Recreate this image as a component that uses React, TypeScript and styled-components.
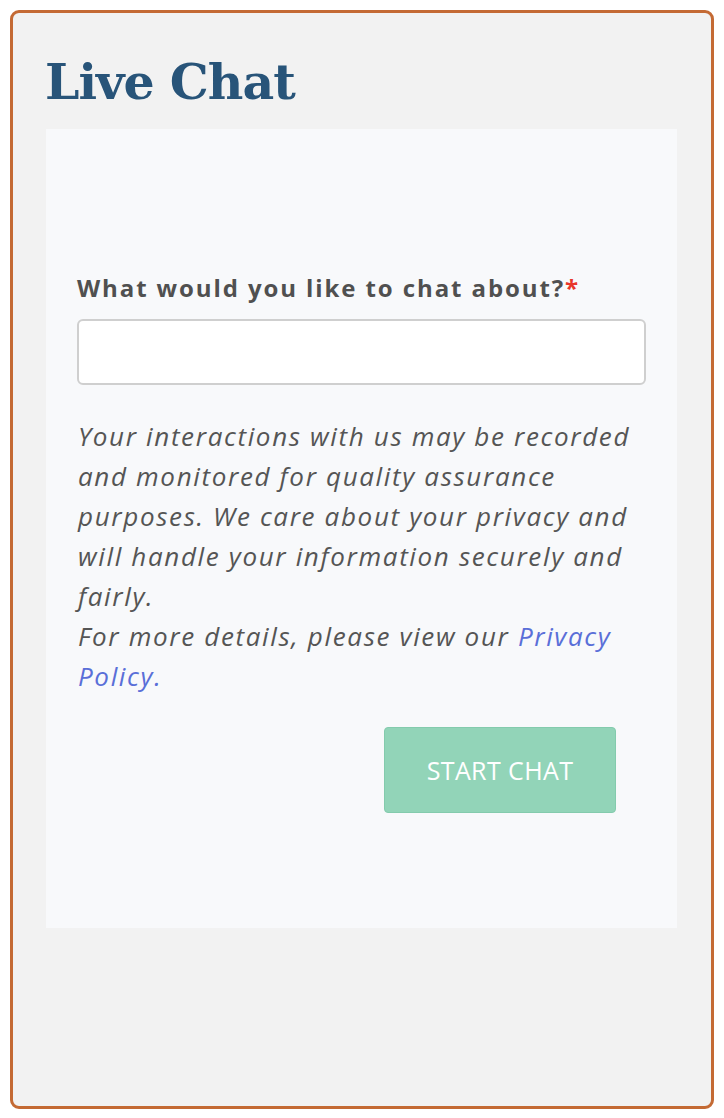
import React from "react";
import styled, { createGlobalStyle } from "styled-components";

const Global = createGlobalStyle`
  html, body { margin: 0; padding: 0; background: #ffffff; }
  * { box-sizing: border-box; }
`;

const Card = styled.div`
  margin: 10px 0 0 10px;
  width: 704px;
  height: 1099px;
  border: 3px solid #c46a34;
  border-radius: 9px;
  background: #f2f2f2;
  padding: 0 34px 0 33px;
  display: flex;
  flex-direction: column;
`;

const Title = styled.h1`
  margin: 34px 0 0 -1px;
  height: 82px;
  font-family: "DejaVu Serif", "Liberation Serif", serif;
  font-weight: 700;
  font-size: 49px;
  line-height: 70px;
  letter-spacing: -1px;
  color: #285479;
`;

const Panel = styled.div`
  background: #f8f9fb;
  height: 799px;
  padding: 144px 31px 0 31px;
  display: flex;
  flex-direction: column;
  font-family: "Open Sans", "Liberation Sans", sans-serif;
`;

const Label = styled.label`
  font-weight: 700;
  font-size: 24px;
  line-height: 30px;
  letter-spacing: 1.9px;
  color: #505050;
`;

const Req = styled.span`
  color: #e8352a;
  letter-spacing: 0;
`;

const Input = styled.input`
  margin-top: 16px;
  height: 66px;
  width: 100%;
  border: 2px solid #cfcfcf;
  border-radius: 6px;
  background: #ffffff;
  font-family: inherit;
  font-size: 20px;
  padding: 0 12px;
  outline: none;
`;

const Notice = styled.p`
  margin: 31px 0 0 1px;
  font-style: italic;
  font-size: 26px;
  line-height: 40px;
  letter-spacing: 1.65px;
  color: #555555;
`;

const Link = styled.a`
  color: #5a6fd8;
  text-decoration: none;
`;

const Actions = styled.div`
  display: flex;
  justify-content: flex-end;
  padding-right: 30px;
  margin-top: 31px;
`;

const Button = styled.button`
  width: 232px;
  height: 86px;
  background: #92d4b8;
  border: 1px solid #84cbad;
  border-radius: 4px;
  color: #ffffff;
  font-family: "Open Sans", "Liberation Sans", sans-serif;
  font-size: 25px;
  font-weight: 400;
  letter-spacing: 0.4px;
  cursor: pointer;
`;

export default function App() {
  return (
    <>
      <Global />
      <Card>
        <Title>Live Chat</Title>
        <Panel>
          <Label>
            What would you like to chat about?<Req>*</Req>
          </Label>
          <Input type="text" />
          <Notice>
            Your interactions with us may be recorded and monitored for quality assurance purposes. We care about your privacy and will handle your information securely and fairly.
            <br />
            For more details, please view our <Link href="#">Privacy Policy.</Link>
          </Notice>
          <Actions>
            <Button>START CHAT</Button>
          </Actions>
        </Panel>
      </Card>
    </>
  );
}
